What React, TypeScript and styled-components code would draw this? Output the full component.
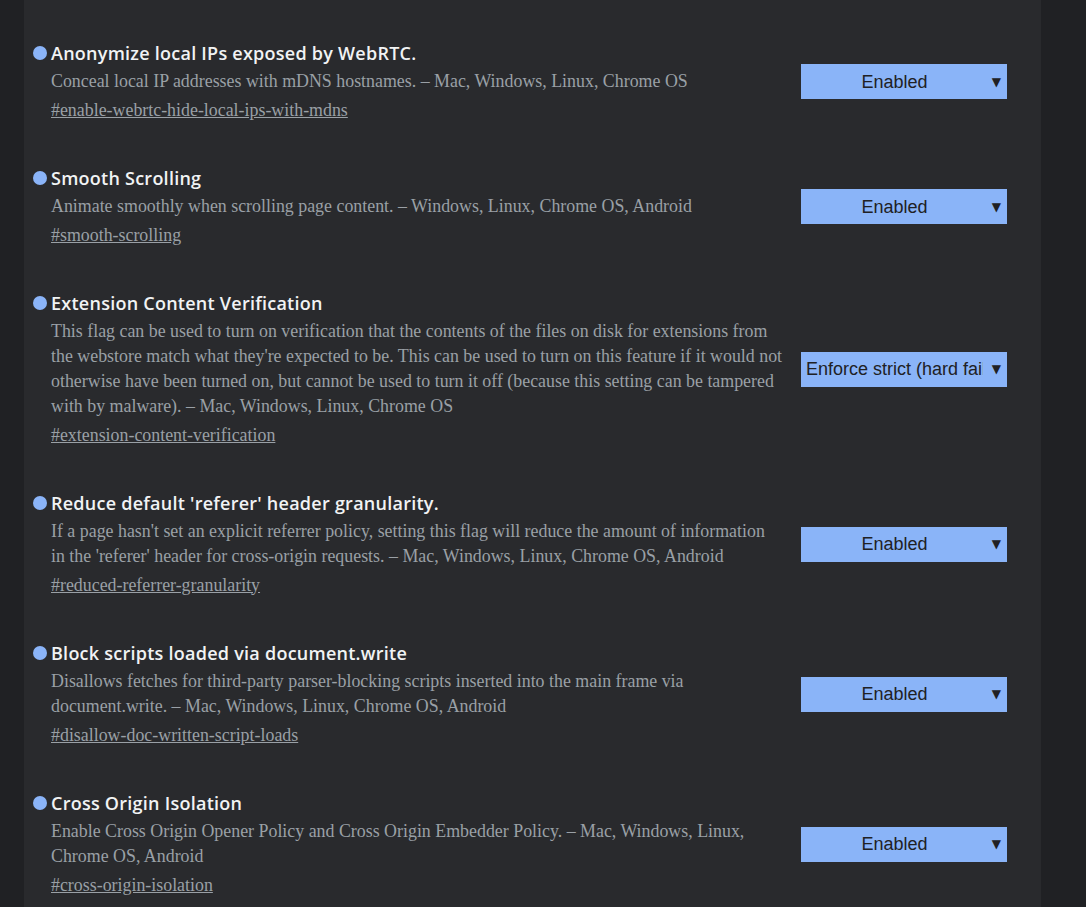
import React from 'react';
import styled, { createGlobalStyle } from 'styled-components';

const GlobalStyle = createGlobalStyle`
  html, body {
    margin: 0;
    padding: 0;
    background: #202124;
  }
`;

const Page = styled.div`
  min-height: 907px;
  padding-left: 24px;
  display: flex;
`;

const Panel = styled.div`
  width: 1017px;
  background: #292a2d;
  padding-top: 19px;
  min-height: 888px;
`;

const Experiment = styled.div`
  display: flex;
  align-items: center;
  padding: 22px 34px 21.5px 9px;
`;

const Info = styled.div`
  flex: 1;
  min-width: 0;
`;

const TitleRow = styled.div`
  display: flex;
  align-items: center;
  gap: 4px;
  height: 24px;
`;

const Bullet = styled.span`
  width: 14px;
  height: 14px;
  border-radius: 50%;
  background: #8ab4f8;
  flex-shrink: 0;
`;

const Title = styled.h2`
  margin: 0;
  font-family: 'Open Sans', 'Lato', sans-serif;
  font-weight: 600;
  font-size: 18px;
  letter-spacing: 0.25px;
  color: #f1f3f4;
`;

const Body = styled.div<{ $measure: number }>`
  padding-left: 18px;
  max-width: ${props => props.$measure}px;
  font-family: 'Liberation Serif', 'Times New Roman', serif;
  font-size: 17.89px;
  line-height: 25px;
  color: #9aa0a6;
`;

const Description = styled.p`
  margin: 3.5px 0 0;
`;

const Permalink = styled.a`
  display: inline-block;
  margin-top: 4px;
  color: #9aa0a6;
  text-decoration: underline;
`;

const SelectWrap = styled.div`
  position: relative;
  width: 206px;
  height: 35px;
  margin-left: 8px;
  flex-shrink: 0;
`;

const Select = styled.select`
  appearance: none;
  width: 100%;
  height: 100%;
  border: none;
  border-radius: 0;
  background: #8ab4f8;
  color: #202124;
  font-family: 'Liberation Sans', Arial, sans-serif;
  font-size: 18px;
  padding: 0 24px 0 5px;
  text-align-last: center;
  outline: none;
`;

const Arrow = styled.span`
  position: absolute;
  right: 6px;
  top: 50%;
  transform: translateY(-50%);
  font-size: 12px;
  color: #202124;
  pointer-events: none;
  font-family: 'DejaVu Sans', sans-serif;
`;

interface Flag {
  title: string;
  description: string;
  id: string;
  value: string;
  measure?: number;
}

const flags: Flag[] = [
  {
    title: 'Anonymize local IPs exposed by WebRTC.',
    description: 'Conceal local IP addresses with mDNS hostnames. – Mac, Windows, Linux, Chrome OS',
    id: 'enable-webrtc-hide-local-ips-with-mdns',
    value: 'Enabled',
  },
  {
    title: 'Smooth Scrolling',
    description: 'Animate smoothly when scrolling page content. – Windows, Linux, Chrome OS, Android',
    id: 'smooth-scrolling',
    value: 'Enabled',
  },
  {
    title: 'Extension Content Verification',
    description:
      "This flag can be used to turn on verification that the contents of the files on disk for extensions from the webstore match what they're expected to be. This can be used to turn on this feature if it would not otherwise have been turned on, but cannot be used to turn it off (because this setting can be tampered with by malware). – Mac, Windows, Linux, Chrome OS",
    id: 'extension-content-verification',
    value: 'Enforce strict (hard fail if hashes are missing)',
  },
  {
    title: "Reduce default 'referer' header granularity.",
    description:
      "If a page hasn't set an explicit referrer policy, setting this flag will reduce the amount of information in the 'referer' header for cross-origin requests. – Mac, Windows, Linux, Chrome OS, Android",
    id: 'reduced-referrer-granularity',
    value: 'Enabled',
    measure: 728,
  },
  {
    title: 'Block scripts loaded via document.write',
    description:
      'Disallows fetches for third-party parser-blocking scripts inserted into the main frame via document.write. – Mac, Windows, Linux, Chrome OS, Android',
    id: 'disallow-doc-written-script-loads',
    value: 'Enabled',
  },
  {
    title: 'Cross Origin Isolation',
    description:
      'Enable Cross Origin Opener Policy and Cross Origin Embedder Policy. – Mac, Windows, Linux, Chrome OS, Android',
    id: 'cross-origin-isolation',
    value: 'Enabled',
  },
];

const App: React.FC = () => {
  return (
    <>
      <GlobalStyle />
      <Page>
        <Panel>
          {flags.map(flag => (
            <Experiment key={flag.id}>
              <Info>
                <TitleRow>
                  <Bullet />
                  <Title>{flag.title}</Title>
                </TitleRow>
                <Body $measure={flag.measure ?? 740}>
                  <Description>{flag.description}</Description>
                  <Permalink href={`#${flag.id}`}>#{flag.id}</Permalink>
                </Body>
              </Info>
              <SelectWrap>
                <Select defaultValue={flag.value}>
                  <option>Default</option>
                  <option>{flag.value}</option>
                  <option>Disabled</option>
                </Select>
                <Arrow>▼</Arrow>
              </SelectWrap>
            </Experiment>
          ))}
        </Panel>
      </Page>
    </>
  );
};

export default App;
